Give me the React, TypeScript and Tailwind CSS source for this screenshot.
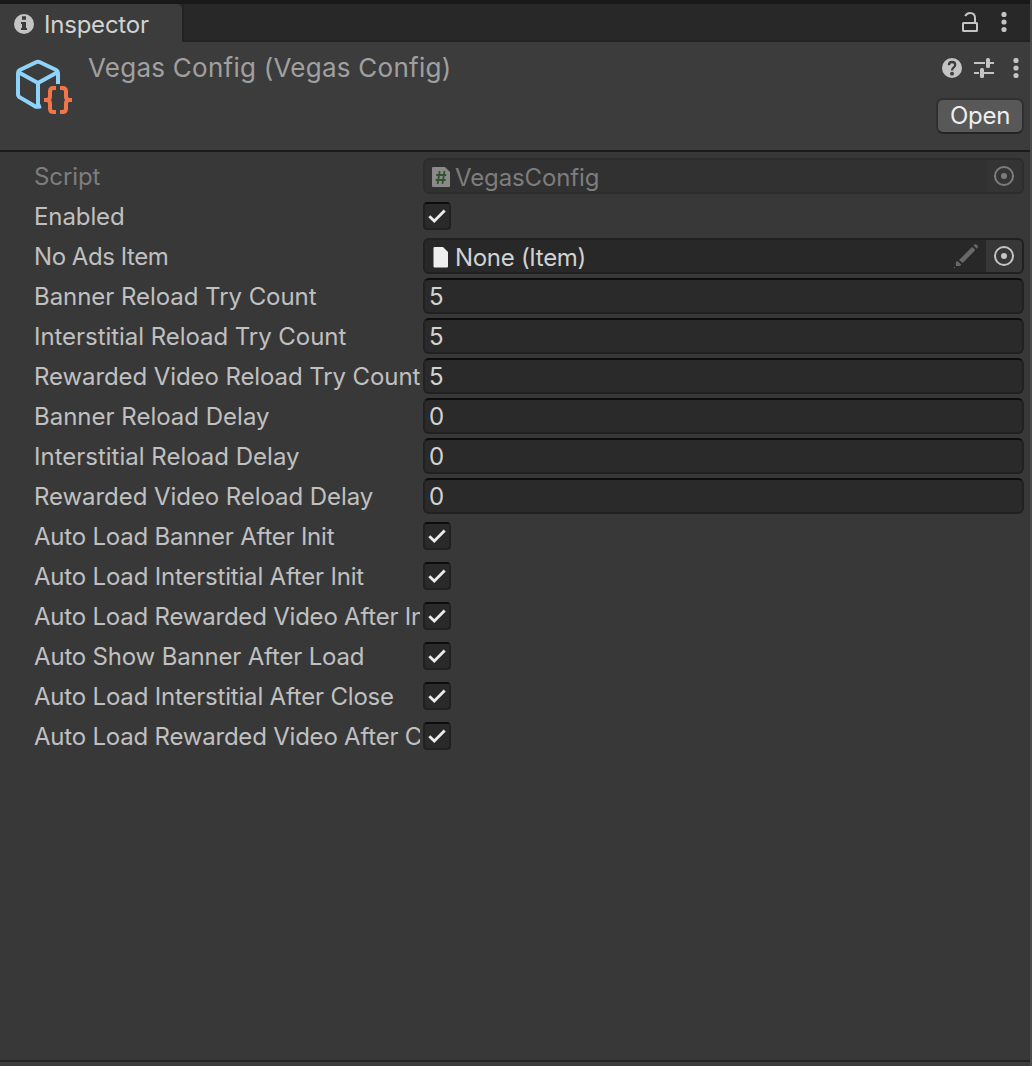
import React from "react";

type Row =
  | { label: string; kind: "script" | "object" | "check"; spacing?: string }
  | { label: string; kind: "number"; value: string; spacing?: string };

const rows: Row[] = [
  { label: "Script", kind: "script", spacing: "tracking-[-0.1px]" },
  { label: "Enabled", kind: "check", spacing: "tracking-[-0.1px]" },
  { label: "No Ads Item", kind: "object", spacing: "tracking-[-0.45px]" },
  { label: "Banner Reload Try Count", kind: "number", value: "5", spacing: "tracking-[-0.05px]" },
  { label: "Interstitial Reload Try Count", kind: "number", value: "5", spacing: "tracking-[-0.05px]" },
  { label: "Rewarded Video Reload Try Count", kind: "number", value: "5", spacing: "tracking-[-0.09px]" },
  { label: "Banner Reload Delay", kind: "number", value: "0" },
  { label: "Interstitial Reload Delay", kind: "number", value: "0" },
  { label: "Rewarded Video Reload Delay", kind: "number", value: "0", spacing: "tracking-[-0.06px]" },
  { label: "Auto Load Banner After Init", kind: "check", spacing: "tracking-[-0.22px]" },
  { label: "Auto Load Interstitial After Init", kind: "check", spacing: "tracking-[-0.19px]" },
  { label: "Auto Load Rewarded Video After Init", kind: "check", spacing: "tracking-[-0.21px]" },
  { label: "Auto Show Banner After Load", kind: "check", spacing: "tracking-[-0.18px]" },
  { label: "Auto Load Interstitial After Close", kind: "check", spacing: "tracking-[-0.19px]" },
  { label: "Auto Load Rewarded Video After Close", kind: "check", spacing: "tracking-[-0.21px]" },
];

function InfoIcon() {
  return (
    <svg width="20" height="20" viewBox="0 0 20 20" className="mt-[2px] shrink-0">
      <circle cx="10" cy="10" r="10" fill="#c4c4c4" />
      <path d="M8 2.200h4v3.600H8zM7 8h5v6h1v2H7v-2h1v-4H7z" fill="#3c3c3c" />
    </svg>
  );
}

function LockIcon() {
  return (
    <svg width="16" height="20" viewBox="0 0 16 20" fill="none" stroke="#c4c4c4" strokeWidth="2">
      <rect x="1" y="11" width="14" height="8" rx="0.5" />
      <path d="M3.300 4.200C4 2.200 5.600 1 8 1c3 0 5 1.800 5 5v5" />
    </svg>
  );
}

function DotsIcon() {
  return (
    <svg width="6" height="20" viewBox="0 0 6 20" fill="#c4c4c4">
      <circle cx="3" cy="2.500" r="2.600" />
      <circle cx="3" cy="10" r="2.600" />
      <circle cx="3" cy="17.500" r="2.600" />
    </svg>
  );
}

function HelpIcon() {
  return (
    <svg width="20" height="20" viewBox="0 0 20 20">
      <circle cx="10" cy="10" r="10" fill="#c4c4c4" />
      <path d="M6.900 7.200C6.900 5.100 8.200 4 10 4s3.200 1.100 3.200 2.900c0 2.300-3.200 2.500-3.200 5.600" fill="none" stroke="#3c3c3c" strokeWidth="2.300" />
      <circle cx="10" cy="15.700" r="1.900" fill="#3c3c3c" />
    </svg>
  );
}

function PresetIcon() {
  return (
    <svg width="20" height="20" viewBox="0 0 20 20" fill="#c4c4c4">
      <path d="M0 4h11v2H0zM15 4h5v2h-5zM0 14h5v2H0zM9 14h11v2H9z" />
      <rect x="12" y="0" width="4" height="10" rx="1.500" />
      <rect x="6" y="10" width="4" height="10" rx="1.500" />
    </svg>
  );
}

function ScriptableObjectIcon() {
  return (
    <svg width="58" height="58" viewBox="0 0 58 58" fill="none" className="shrink-0">
      <g stroke="#8fd3fb" strokeWidth="4" strokeLinejoin="round" transform="translate(0 -1)">
        <path d="M42 26V15q0-2-1.800-3L24 4.200q-2-1-4 0L3.800 12Q2 13 2 15v21q0 2.400 1.900 3.400L19 48.300q2.400 1 6-.3" />
        <path d="M3 14.500l18.600 10.200a.9.900 0 0 0 .8 0L41 14.500" />
        <path d="M22 25v23" />
      </g>
      <g stroke="#f0764a" strokeWidth="4">
        <path d="M40 29h-2.500Q34 29 34 32.500v5q0 3-3 3.500q3 .5 3 3.500v5q0 3.500 3.500 3.500H40" />
        <path d="M44 29h2.500Q50 29 50 32.500v5q0 3 3 3.500q-3 .5-3 3.500v5q0 3.500-3.500 3.500H44" />
        <path d="M28 41h5M51 41h5" />
      </g>
    </svg>
  );
}

function TargetIcon() {
  return (
    <svg width="20" height="20" viewBox="0 0 20 20">
      <circle cx="10" cy="10" r="9" fill="none" stroke="#c4c4c4" strokeWidth="2" />
      <circle cx="10" cy="10" r="3" fill="#c4c4c4" />
    </svg>
  );
}

function PencilIcon() {
  return (
    <svg width="25" height="25" viewBox="0 0 25 25" fill="#686868">
      <path d="M5 17L17.500 4.500Q18.300 3.800 19 4.500L20.700 6.200Q21.400 7 20.700 7.700L8.700 20zM20 1.800q1.500-1.300 3.100.2q1.500 1.500.3 3.100l-.6.700L19.400 2.500zM1.800 19.800q0-1.200 1.700-1.800l3.600 3.400q-.6 1.500-1.800 1.600H1.900zM0 24h1v1H0z" />
    </svg>
  );
}

function ScriptFileIcon() {
  return (
    <svg width="18" height="20" viewBox="0 0 18 20" className="mt-[2px] shrink-0">
      <path d="M1 0h12l5 5v14q0 1-1 1H1q-1 0-1-1V1q0-1 1-1z" fill="#8a8a8a" />
      <path d="M7.700 4L5.600 17M12.500 4l-2.100 13M4.200 8h10M3.700 13h10" stroke="#315330" strokeWidth="1.800" />
    </svg>
  );
}

function FileIcon() {
  return (
    <svg width="18" height="22" viewBox="0 0 18 22" className="mt-[2px] shrink-0">
      <path d="M2.500 1H11l5 5v14.500q0 1-1 1H2.500q-1 0-1-1V2q0-1 1-1z" fill="#efefef" />
    </svg>
  );
}

function Checkbox() {
  return (
    <div className="flex h-7 w-7 items-center justify-center rounded-[4px] border-2 border-[#212121] border-t-[#0d0d0d] bg-[#2a2a2a]">
      <svg width="20" height="16" viewBox="0 0 20 16" fill="none" stroke="#ededed" strokeWidth="2.800">
        <path d="M2.300 8.300l5 4.700L17.700 2.600" />
      </svg>
    </div>
  );
}

function ObjectField({ script }: { script: boolean }) {
  return (
    <div className={script ? "flex h-9 overflow-hidden rounded-[6px] border-2 border-[#2d2d2d] bg-[#313131]" : "flex h-9 overflow-hidden rounded-[6px] border-2 border-[#202020] bg-[#282828]"}>
      <div className="flex flex-1 items-center pl-[7px]">
        {script ? <ScriptFileIcon /> : <FileIcon />}
        <span className={script ? "ml-[5px] pt-[3px] tracking-[-0.12px] text-[#7d7d7d]" : "ml-[5px] pt-[3px] tracking-[-0.3px] text-[#d2d2d2]"}>
          {script ? "VegasConfig" : "None (Item)"}
        </span>
      </div>
      {!script && (
        <div className="flex w-8 pt-[3px]">
          <PencilIcon />
        </div>
      )}
      <div className={script ? "flex w-9 justify-center bg-[#343434] pt-[6px]" : "flex w-9 justify-center bg-[#373737] pt-[6px]"}>
        <span className={script ? "opacity-50" : ""}><TargetIcon /></span>
      </div>
    </div>
  );
}

function Field({ row }: { row: Row }) {
  switch (row.kind) {
    case "number":
      return (
        <div className="flex h-9 items-center rounded-[6px] border-2 border-[#212121] border-t-[#0d0d0d] bg-[#2a2a2a] pl-1 pt-[2px] text-[#d2d2d2]">
          {row.value}
        </div>
      );
    case "check":
      return <div className="h-9 pt-[4px]"><Checkbox /></div>;
    default:
      return <ObjectField script={row.kind === "script"} />;
  }
}

export default function App() {
  return (
    <div className="flex h-[1066px] w-[1032px] overflow-hidden bg-[#383838] font-['Inter',sans-serif] text-[24px] leading-[30px] text-[#c0c0c0]">
      <div className="flex w-[1030px] flex-col">
        <header className="flex h-[42px] border-t-4 border-[#191919] bg-[#282828]">
          <div className="flex w-[182px] items-center gap-[10px] rounded-tr-[5px] bg-[#3c3c3c] pl-[14px] text-[#d2d2d2]">
            <InfoIcon />
            <span className="pt-[3px] tracking-[-0.22px]">Inspector</span>
          </div>
          <div className="flex flex-1 justify-end gap-[23px] border-b-2 border-l-2 border-[#232323] pr-[23px] pt-2">
            <LockIcon />
            <DotsIcon />
          </div>
        </header>
        <section className="flex h-[110px] border-b-2 border-[#1a1a1a] bg-[#3c3c3c] pl-[16px]">
          <div className="pt-[17px]"><ScriptableObjectIcon /></div>
          <h1 className="ml-[14px] pt-[11px] text-[26px] tracking-[0.25px] text-[#a0a0a0]">Vegas Config (Vegas Config)</h1>
          <div className="ml-auto flex flex-col items-end">
            <div className="flex pr-[11px] pt-4">
              <HelpIcon />
              <span className="ml-3"><PresetIcon /></span>
              <span className="ml-[19px]"><DotsIcon /></span>
            </div>
            <button className="mr-[6px] mt-[20px] h-9 w-[88px] rounded-[7px] border-2 border-[#303030] border-b-[#242424] bg-[#585858] tracking-[-0.25px] text-[#eeeeee]">
              Open
            </button>
          </div>
        </section>
        <main className="flex flex-1 flex-col gap-1 pl-[34px] pr-[6px] pt-[6px]">
          {rows.map((row) => (
            <div key={row.label} className="flex h-9">
              <div className={row.kind === "script" ? "w-[386px] shrink-0 overflow-hidden whitespace-nowrap pt-[4px] text-[#7d7d7d]" : "w-[386px] shrink-0 overflow-hidden whitespace-nowrap pt-[4px]"}>
                <span className={row.spacing ?? ""}>{row.label}</span>
              </div>
              <div className="ml-[3px] flex-1"><Field row={row} /></div>
            </div>
          ))}
        </main>
        <footer className="h-[6px] border-t-2 border-[#232323] bg-[#3c3c3c]" />
      </div>
      <div className="w-[2px] bg-[#4b4b4b]" />
    </div>
  );
}
